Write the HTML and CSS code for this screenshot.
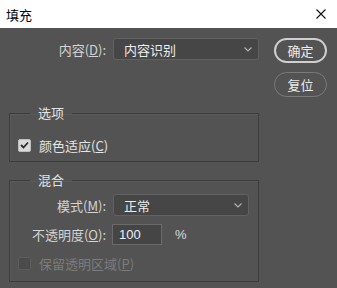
FILE: index.html
```html
<!DOCTYPE html>
<html lang="zh-CN">
<head>
    <meta charset="UTF-8">
    <title>填充</title>
    <link rel="stylesheet" href="styles.css">
</head>
<body>
    <div class="dialog">
        <div class="titlebar">
            <span class="title">填充</span>
            <svg class="close" width="10" height="10" viewBox="0 0 10 10">
                <path d="M0.5 0.5 L9.5 9.5 M9.5 0.5 L0.5 9.5" stroke="#111" stroke-width="1.1" fill="none"/>
            </svg>
        </div>

        <div class="main">
            <div class="left">
                <div class="row content-row">
                    <label class="label">内容(<u>D</u>):</label>
                    <div class="select wide">
                        <span>内容识别</span>
                        <svg width="8" height="5" viewBox="0 0 8 5"><path d="M0.5 0.5 L4 4 L7.5 0.5" stroke="#b0b0b0" stroke-width="1.2" fill="none"/></svg>
                    </div>
                </div>

                <fieldset class="group options">
                    <legend>选项</legend>
                    <div class="check-row">
                        <span class="checkbox checked">
                            <svg width="9" height="8" viewBox="0 0 9 8"><path d="M1 4 L3.5 6.5 L8 1.5" stroke="#2b2b2b" stroke-width="1.8" fill="none"/></svg>
                        </span>
                        <span>颜色适应(<u>C</u>)</span>
                    </div>
                </fieldset>

                <fieldset class="group blend">
                    <legend>混合</legend>
                    <div class="row">
                        <label class="label">模式(<u>M</u>):</label>
                        <div class="select narrow">
                            <span>正常</span>
                            <svg width="8" height="5" viewBox="0 0 8 5"><path d="M0.5 0.5 L4 4 L7.5 0.5" stroke="#b0b0b0" stroke-width="1.2" fill="none"/></svg>
                        </div>
                    </div>
                    <div class="row opacity-row">
                        <label class="label">不透明度(<u>O</u>):</label>
                        <div class="input">100</div>
                        <span class="unit">%</span>
                    </div>
                    <div class="check-row disabled">
                        <span class="checkbox"></span>
                        <span>保留透明区域(<u>P</u>)</span>
                    </div>
                </fieldset>
            </div>

            <div class="buttons">
                <button class="btn primary">确定</button>
                <button class="btn">复位</button>
            </div>
        </div>
    </div>
</body>
</html>
```

FILE: styles.css
```css
body {
    margin: 0;
    background-color: #535353;
    font-family: "Noto Sans CJK SC", "Liberation Sans", sans-serif;
    font-size: 13px;
    color: #dcdcdc;
}

.dialog {
    width: 337px;
    height: 288px;
    overflow: hidden;
}

.titlebar {
    height: 28px;
    background: #fff;
    display: flex;
    align-items: center;
    justify-content: space-between;
    padding: 0 11px 0 6px;
}

.title {
    color: #000;
    font-size: 13px;
}

.main {
    display: flex;
    padding: 10px 0 0 9px;
}

.left {
    width: 250px;
}

.row {
    display: flex;
    align-items: center;
    height: 22px;
}

.label {
    text-align: right;
    color: #d4d4d4;
    margin-right: 7px;
}

.content-row .label {
    width: 97px;
}

.select {
    height: 20px;
    background: #464646;
    border: 1px solid #616161;
    border-radius: 3px;
    display: flex;
    align-items: center;
    justify-content: space-between;
    padding: 0 6px 0 10px;
    color: #ececec;
}

.select.wide {
    width: 128px;
}

.select.narrow {
    width: 118px;
}

.group {
    margin: 0;
    padding: 0 8px;
    border: 1px solid #3c3c3c;
    box-shadow: inset 1px 1px 0 #5a5a5a;
}

.group legend {
    margin-left: 12px;
    padding: 0 8px 0 8px;
    line-height: 18px;
    color: #e4e4e4;
}

.options {
    margin-top: 44px;
    padding-top: 14px;
    padding-bottom: 7px;
}

.blend {
    margin-top: 9px;
    padding-top: 5px;
    padding-bottom: 9px;
}

.blend .label {
    width: 88px;
}

.opacity-row {
    margin-top: 7px;
}

.opacity-row .label {
    margin-right: 6px;
}

.input {
    width: 42px;
    height: 19px;
    line-height: 19px;
    background: #454545;
    border: 1px solid #6a6a6a;
    padding-left: 6px;
    color: #e6f0ff;
    font-family: "Liberation Sans", sans-serif;
    font-size: 13px;
}

.unit {
    margin-left: 13px;
    color: #dcdcdc;
    font-family: "Liberation Sans", sans-serif;
}

.check-row {
    display: flex;
    align-items: center;
    height: 18px;
    gap: 8px;
    color: #e4e4e4;
}

.blend .check-row {
    margin-top: 9px;
}

.checkbox {
    width: 13px;
    height: 13px;
    box-sizing: border-box;
    border-radius: 2px;
    background: #4b4b4b;
    border: 1px solid #5d5d5d;
    display: flex;
    align-items: center;
    justify-content: center;
}

.checkbox.checked {
    background: #d9d9d9;
    border-color: #bdbdbd;
}

.disabled {
    color: #7c7c7c;
}

.buttons {
    display: flex;
    flex-direction: column;
    gap: 9px;
    margin-left: 15px;
}

.btn {
    width: 53px;
    height: 25px;
    border-radius: 13px;
    background: #535353;
    border: 1px solid #7a7a7a;
    color: #ececec;
    font-family: "Noto Sans CJK SC", sans-serif;
    font-size: 13px;
    padding: 0;
}

.btn.primary {
    border: 2px solid #cfcfcf;
}
```
